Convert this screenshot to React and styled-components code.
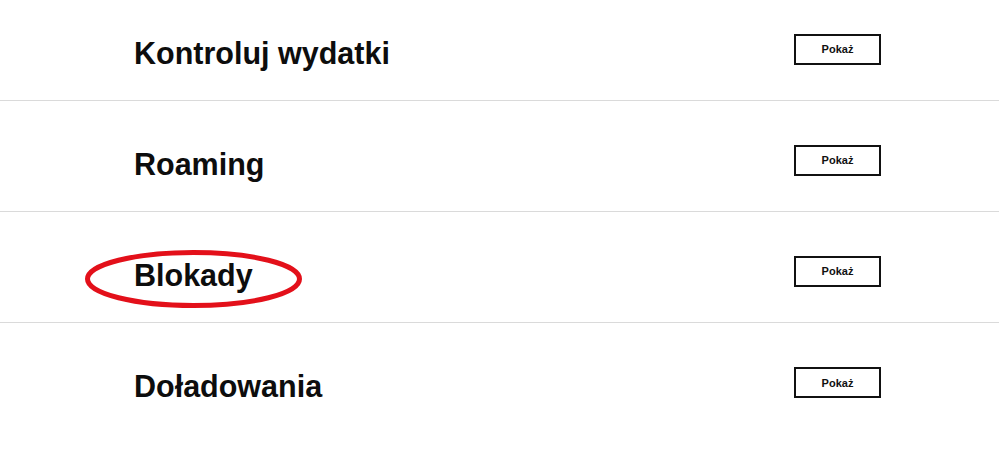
import styled, { createGlobalStyle } from "styled-components";

const GlobalStyle = createGlobalStyle`
  body {
    margin: 0;
    background: #fff;
    font-family: "Liberation Sans", Arial, sans-serif;
  }
`;

const List = styled.div`
  margin-top: -10px;
  display: flex;
  flex-direction: column;
`;

const Row = styled.div`
  display: flex;
  align-items: center;
  justify-content: space-between;
  padding: 8px 118px 0 134px;
  box-sizing: border-box;
  height: 111px;
  border-bottom: 1px solid #dadada;

  &:last-child {
    border-bottom: none;
  }
`;

const Title = styled.h2`
  position: relative;
  margin: 0;
  padding-top: 8px;
  font-size: 30.5px;
  font-weight: 700;
  color: #0d0d0d;
`;

const Circle = styled.svg`
  position: absolute;
  left: -49px;
  top: 0px;
  overflow: visible;
  pointer-events: none;
`;

const Button = styled.button`
  width: 87px;
  height: 31px;
  border: 2px solid #111;
  background: #fff;
  font-family: "Liberation Sans", Arial, sans-serif;
  font-size: 11px;
  font-weight: 700;
  color: #111;
  padding: 0;
  cursor: pointer;
`;

const items = [
  { title: "Kontroluj wydatki" },
  { title: "Roaming" },
  { title: "Blokady", marked: true },
  { title: "Doładowania" },
];

const App = () => {
  return (
    <>
      <GlobalStyle />
      <List>
        {items.map((item) => (
          <Row key={item.title}>
            <Title>
              {item.title}
              {item.marked && (
                <Circle width="217" height="58" viewBox="0 0 217 58">
                  <ellipse cx="108.5" cy="29" rx="106" ry="26.5" fill="none" stroke="#e3101a" strokeWidth="5" />
                </Circle>
              )}
            </Title>
            <Button>Pokaż</Button>
          </Row>
        ))}
      </List>
    </>
  );
};

export default App;
